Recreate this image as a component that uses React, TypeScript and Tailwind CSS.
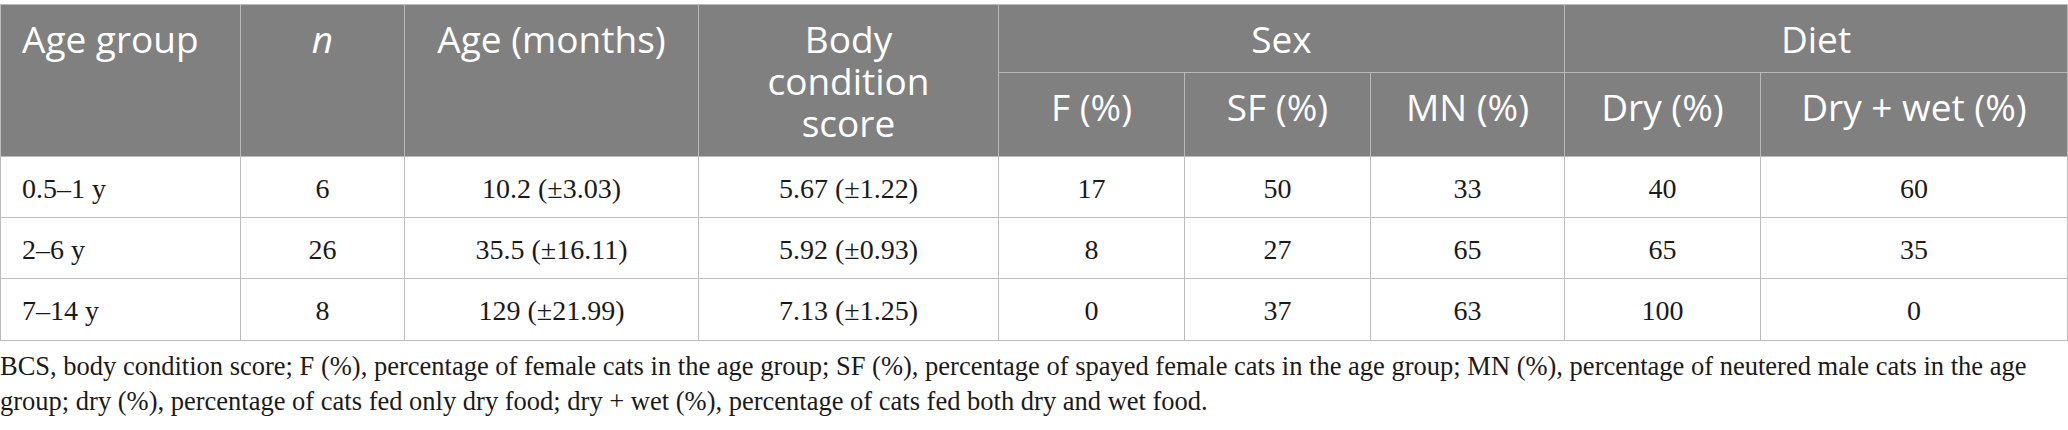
import React from "react";

const rows: string[][] = [
  ["0.5–1 y", "6", "10.2 (±3.03)", "5.67 (±1.22)", "17", "50", "33", "40", "60"],
  ["2–6 y", "26", "35.5 (±16.11)", "5.92 (±0.93)", "8", "27", "65", "65", "35"],
  ["7–14 y", "8", "129 (±21.99)", "7.13 (±1.25)", "0", "37", "63", "100", "0"],
];

const head =
  "bg-[#7f807f] text-white border-r border-b border-[#b9b9b9] text-[37px] leading-[42px] font-['Open_Sans',sans-serif]";
const cell =
  "bg-white text-[#1a1a1a] border-r border-b border-[#bdbdbd] text-[28px] leading-[32px] font-['Liberation_Serif',serif] flex items-center pt-[3px]";

export default function App() {
  return (
    <div className="w-[2068px] h-[430px] bg-white pt-[4px] overflow-hidden">
      <div className="grid grid-cols-[240px_164px_294px_300px_186px_186px_194px_196px_307px] grid-rows-[68px_84px_61px_61px_62px] border-l border-t border-[#bdbdbd] w-[2068px]">
        <div className={`${head} row-span-2 pt-[13px] pl-[21px]`}>Age group</div>
        <div className={`${head} row-span-2 pt-[13px] text-center italic`}>n</div>
        <div className={`${head} row-span-2 pt-[13px] text-center`}>Age (months)</div>
        <div className={`${head} row-span-2 pt-[13px] text-center`}>
          Body
          <br />
          condition
          <br />
          score
        </div>
        <div className={`${head} col-span-3 pt-[13px] text-center`}>Sex</div>
        <div className={`${head} col-span-2 pt-[13px] text-center`}>Diet</div>
        <div className={`${head} pt-[13px] text-center`}>F (%)</div>
        <div className={`${head} pt-[13px] text-center`}>SF (%)</div>
        <div className={`${head} pt-[13px] text-center`}>MN (%)</div>
        <div className={`${head} pt-[13px] text-center`}>Dry (%)</div>
        <div className={`${head} pt-[13px] text-center`}>Dry + wet (%)</div>
        {rows.map((r, ri) =>
          r.map((v, ci) => (
            <div
              key={`${ri}-${ci}`}
              className={`${cell} ${ci === 0 ? "justify-start pl-[21px]" : "justify-center"}`}
            >
              {v}
            </div>
          ))
        )}
      </div>
      <div className="mt-[8px] text-[26.5px] leading-[35px] text-[#1a1a1a] font-['Liberation_Serif',serif] whitespace-nowrap">
        <div>
          BCS, body condition score; F (%), percentage of female cats in the age group; SF (%), percentage of spayed
          female cats in the age group; MN (%), percentage of neutered male cats in the age
        </div>
        <div>
          group; dry (%), percentage of cats fed only dry food; dry + wet (%), percentage of cats fed both dry and wet
          food.
        </div>
      </div>
    </div>
  );
}
